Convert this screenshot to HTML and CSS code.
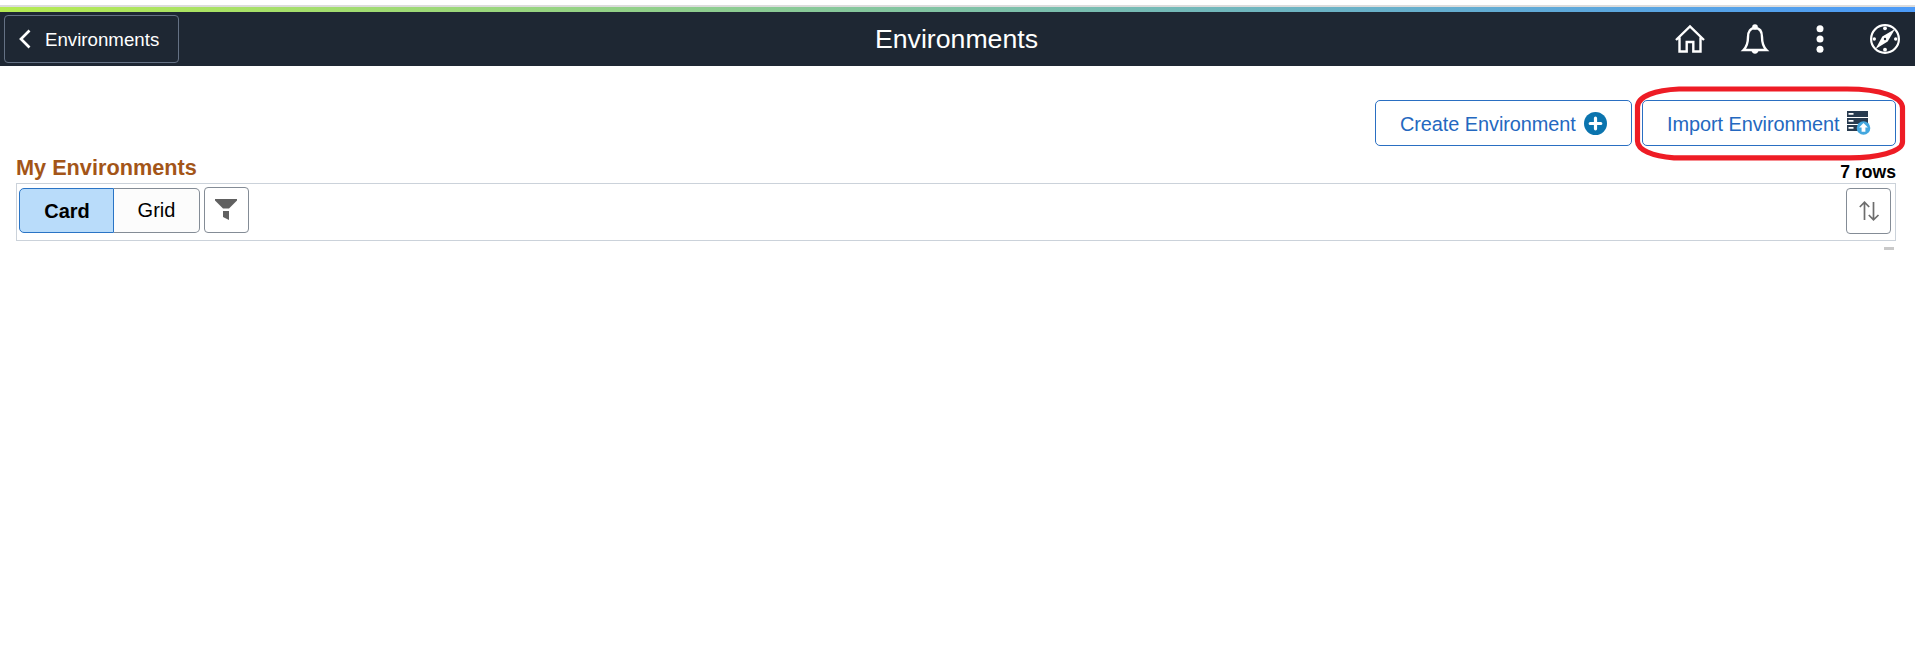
FILE: index.html
```html
<!DOCTYPE html>
<html lang="en">
<head>
<meta charset="utf-8">
<title>Environments</title>
<link rel="stylesheet" href="styles.css">
</head>
<body>
<div class="accent"></div>
<header class="banner">
  <button class="back">
    <svg width="14" height="20" viewBox="0 0 14 20"><path d="M11.500 1.500 3 10l8.500 8.500" fill="none" stroke="#fff" stroke-width="2.700"/></svg>
    <span>Environments</span>
  </button>
  <h1 class="title">Environments</h1>
  <nav class="actions">
    <svg width="30" height="30" viewBox="0 0 30 30"><path d="M1 16 15 2.500 29 16M4.500 13.500V27.500H11.700V18h6.600v9.500h7.200V13.500" fill="none" stroke="#fff" stroke-width="2.400"/></svg>
    <svg width="30" height="30" viewBox="0 0 30 30"><path d="M3.500 26c4-4 4.500-8 4.500-13C8 7.500 10.500 4 15 4s7 3.500 7 9c0 5 .5 9 4.500 13z" fill="none" stroke="#fff" stroke-width="2.400"/><circle cx="15" cy="3" r="2.800" fill="#fff"/><path d="M11.500 26h7c0 5-7 5-7 0z" fill="#fff"/></svg>
    <svg width="30" height="30" viewBox="0 0 30 30" fill="#fff"><circle cx="15" cy="4.800" r="3.500"/><circle cx="15" cy="15" r="3.500"/><circle cx="15" cy="25.200" r="3.500"/></svg>
    <svg width="30" height="30" viewBox="0 0 30 30"><circle cx="15" cy="15" r="13.900" fill="none" stroke="#fff" stroke-width="2.200"/><path d="M25 5 17.700 17.500 5.500 25 12.300 12.500z" fill="#fff"/><circle cx="15" cy="15" r="1.200" fill="#1e2733"/><g fill="#fff"><circle cx="15" cy="4.300" r="1.900"/><circle cx="15" cy="25.700" r="1.900"/><circle cx="4.300" cy="15" r="1.700"/><circle cx="25.700" cy="15" r="1.700"/></g></svg>
  </nav>
</header>
<main class="page">
  <div class="toolbar">
    <button class="action create"><span>Create Environment</span>
      <svg width="23" height="23" viewBox="0 0 23 23"><circle cx="11.500" cy="11.500" r="11.500" fill="#0b74ae"/><path d="M11.500 6.200v10.600M6.200 11.500h10.600" stroke="#fff" stroke-width="3.200" stroke-linecap="round"/></svg>
    </button>
    <button class="action import"><span>Import Environment</span>
      <svg width="24" height="24" viewBox="0 0 24 24"><path fill="#283b4f" d="M0 0h21v6H0zM0 7h21v6H0zM0 14h21v6H0z"/><path fill="#fff" d="M1.500 2h5v1.800h-5zM1.500 9h5v1.800h-5zM1.500 16h5v1.800h-5z"/><circle cx="16.500" cy="17" r="6.800" fill="#43a7df"/><path d="m16.500 12 4.400 4.500h-2.500v4.300h-3.800v-4.300h-2.500z" fill="#fff"/></svg>
    </button>
    <svg class="highlight" width="272" height="77" viewBox="0 0 272 77"><path d="M45 4H213C247 4 268.500 12 268.500 23V57C268.500 67 242 72.800 216 72.800H40C18 71 3.500 65 3.500 56V22C3.500 11 22 5 45 4Z" fill="none" stroke="#ee1c25" stroke-width="5.200"/></svg>
  </div>
  <div class="heading">
    <h2>My Environments</h2>
    <span class="count">7 rows</span>
  </div>
  <section class="panel">
    <div class="views">
      <button class="view selected">Card</button>
      <button class="view">Grid</button>
    </div>
    <button class="tool filter"><svg width="22" height="21" viewBox="0 0 22 21" fill="#606060"><path d="M0 0h22v1.500L14 9.500H8L0 1.500zM8 12h6v9l-6-3z"/></svg></button>
    <button class="tool sort"><svg width="21" height="20" viewBox="0 0 21 20" fill="none" stroke="#6d6d6d" stroke-width="1.700"><path d="M5.500 19V1M.8 6l4.700-4.800L10.200 6M14.500 1v18M9.800 14l4.700 4.800 5-4.800"/></svg></button>
  </section>
  <div class="grip"></div>
</main>
</body>
</html>
```

FILE: styles.css
```css
* { box-sizing: border-box; }
body {
  margin: 0;
  background: #fff;
  font-family: "Liberation Sans", Arial, sans-serif;
  color: #000;
}
button { margin: 0; padding: 0; font: inherit; background: #fff; }
svg { display: block; flex: none; }
h1, h2 { margin: 0; }
.accent {
  height: 7px;
  margin-top: 5px;
  border-top: 2px solid #dcdcdc;
  background: linear-gradient(90deg, #b5eb52, #4b9af8) padding-box;
}
.banner {
  display: grid;
  grid-template-columns: 1fr auto 1fr;
  height: 54px;
  background: #1e2733;
  color: #fff;
}
.back {
  display: flex;
  align-items: center;
  gap: 13px;
  width: 175px;
  height: 48px;
  margin: 3px 0 0 4px;
  padding-left: 13px;
  border: 1px solid #647184;
  border-radius: 4px;
  background: transparent;
  color: #fff;
  font-size: 18.700px;
}
.back span { padding-top: 2px; }
.title {
  padding-right: 2px;
  font-size: 26.700px;
  font-weight: 400;
  line-height: 54px;
}
.actions {
  display: flex;
  justify-content: flex-end;
  gap: 35px;
  padding: 12px 15px 0 0;
}
.page { padding: 34px 19px 0 16px; }
.toolbar {
  position: relative;
  display: flex;
  justify-content: flex-end;
  gap: 10px;
}
.action {
  display: flex;
  align-items: center;
  gap: 8px;
  height: 46px;
  padding-left: 24px;
  border: 1px solid #2a6fc2;
  border-radius: 5px;
  color: #2468c0;
  font-size: 19.900px;
}
.action span { padding-top: 2px; letter-spacing: -0.06px; }
.create { width: 257px; }
.import { width: 254px; }
.highlight { position: absolute; right: -10px; top: -15px; }
.heading {
  display: flex;
  justify-content: space-between;
  height: 37px;
}
h2 { color: #a35518; font-size: 21.700px; line-height: 43px; }
.count { font-size: 17.600px; font-weight: 700; line-height: 53px; }
.panel {
  display: flex;
  height: 58px;
  padding: 3px 4px 0 2px;
  border: 1px solid #cbd2da;
}
.views { display: flex; margin-top: 1px; }
.view {
  width: 86px;
  height: 45px;
  border: 1px solid #848c96;
  border-left: 0;
  border-radius: 0 5px 5px 0;
  background: #fcfcfc;
  font-size: 20px;
}
.selected {
  width: 95px;
  padding: 2px 0 0 1px;
  border: 1px solid #2a74c5;
  border-radius: 5px 0 0 5px;
  background: #b9dcfa;
  font-weight: 700;
}
.tool {
  display: flex;
  justify-content: center;
  width: 45px;
  height: 46px;
  border: 1px solid #848c96;
  border-radius: 4px;
}
.filter { margin-left: 4px; padding: 11px 1px 0 0; }
.sort { margin: 1px 0 0 auto; padding: 12px 0 0 1px; }
.grip { width: 10px; height: 3px; margin: 6px 2px 0 auto; background: #c9c9c9; }
```
